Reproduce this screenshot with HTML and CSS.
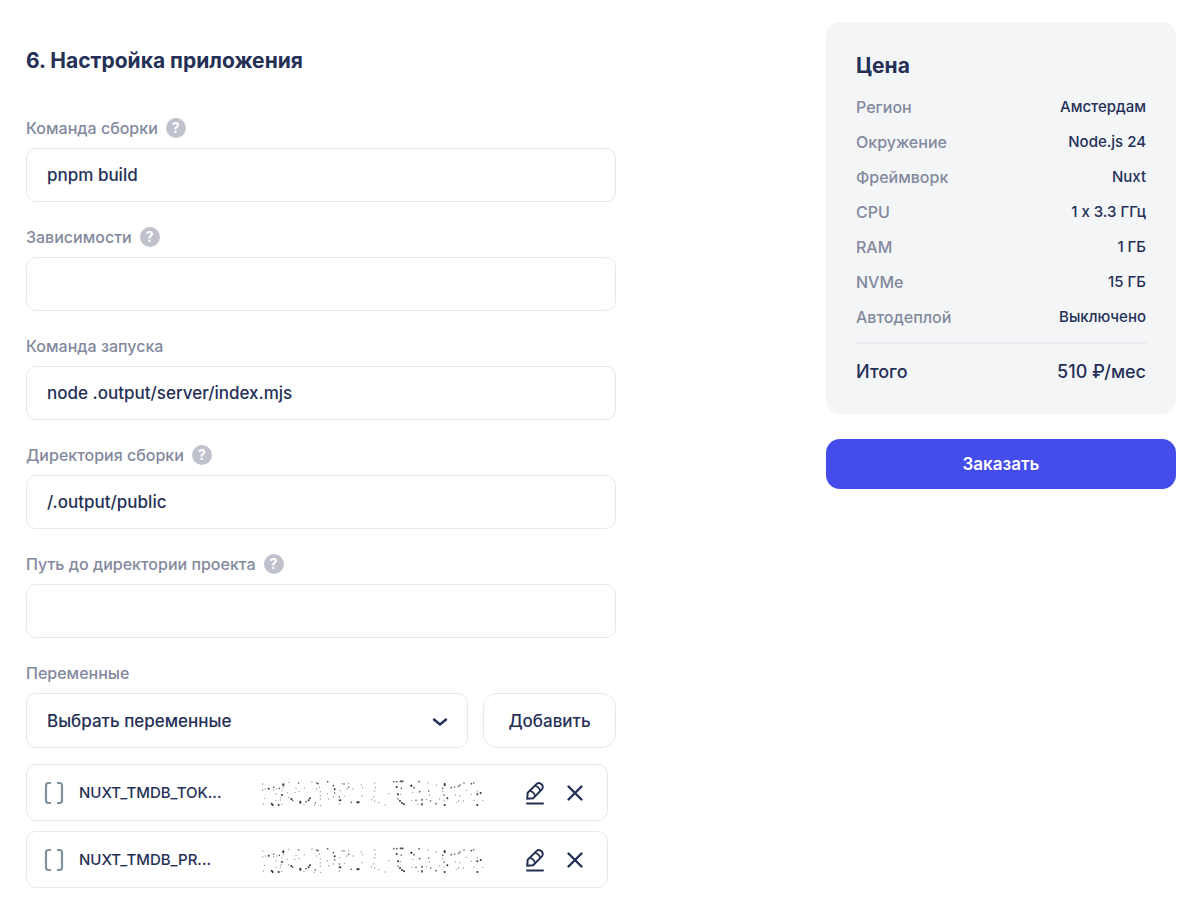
FILE: index.html
```html
<!DOCTYPE html>
<html lang="ru">
<head>
<meta charset="utf-8">
<meta name="viewport" content="width=device-width, initial-scale=1">
<title>Настройка приложения</title>
<link rel="stylesheet" href="styles.css">
</head>
<body>
<svg class="sprite" aria-hidden="true">
  <symbol id="brackets" viewBox="0 0 20 24">
    <path d="M7 2H4.500Q2 2 2 4.500V19.500Q2 22 4.500 22H7M13 2h2.500Q18 2 18 4.500V19.500Q18 22 15.500 22H13" fill="none" stroke="currentColor" stroke-width="2.200"/>
  </symbol>
  <symbol id="pencil" viewBox="0 0 20 24">
    <g fill="none" stroke="currentColor" stroke-width="2" stroke-linecap="round" stroke-linejoin="round">
      <path d="M2.200 17.800 2.700 11.700 11.700 2.900Q13.500 1.300 15.600 2.500L17.400 4.300Q18.600 6.300 17.100 8.100L8.200 17.200Z"/>
      <path stroke-width="1.700" d="M4.800 9.800Q9 11 10 15M10 4.900Q14.200 5.800 15.200 9.800"/>
      <path d="M2 22.600H18"/>
    </g>
  </symbol>
  <symbol id="cross" viewBox="0 0 20 20">
    <path d="M3.500 3.500 16.500 16.500M16.500 3.500 3.500 16.500" fill="none" stroke="currentColor" stroke-width="2.400" stroke-linecap="round"/>
  </symbol>
  <symbol id="speckles" viewBox="0 0 696 108">
    <g fill="none" stroke="#111" stroke-linecap="round">
      <path stroke-width="4" opacity=".45" d="M20 27h0M20 45h0M28 42h0M53 45h0M62 42h0M82 38h0M78 47h0M60 57h0M75 68h0M60 76h0M73 75h0M25 70h0M22 87h0M77 88h0M94 52h0M98 22h0M98 68h0M120 40h0M117 52h0M130 50h0M145 38h0M144 88h0M168 21h0M182 42h0M190 36h0M193 50h0M193 62h0M193 72h0M175 91h0M194 91h0M214 56h0M218 72h0M232 66h0M252 47h0M258 26h0M278 25h0M273 42h0M250 88h0M265 64h0M291 42h0M316 30h0M320 38h0M318 62h0M356 24h0M358 38h0M356 48h0M353 66h0M346 74h0M356 78h0M368 83h0M388 90h0M398 56h0M434 58h0M470 52h0M468 76h0M498 76h0M486 88h0M516 24h0M520 60h0M511 74h0M541 30h0M560 50h0M564 76h0M551 72h0M598 60h0M611 62h0M601 82h0M608 78h0M622 78h0M631 46h0M646 58h0M664 48h0M654 76h0M680 76h0"/>
      <path stroke-width="5" opacity=".7" d="M53 37h0M70 40h0M110 76h0M128 24h0M150 80h0M182 24h0M186 26h0M178 84h0M215 20h0M232 32h0M236 54h0M264 27h0M278 37h0M250 66h0M250 76h0M286 82h0M413 20h0M422 20h0M433 19h8M436 40h0M426 72h0M466 32h0M474 38h0M489 20h0M491 50h0M480 76h0M498 74h0M498 86v4M518 48h0M524 78h0M540 86h0M560 40h0M564 60h0M586 38h0M596 36h0M608 34h0M612 30h0M624 24h0M646 26h0M653 24h0"/>
      <path stroke-width="6" opacity=".85" d="M38 41h0M82 28v3M78 60h0M47 86h0M50 90h0M68 90h0M106 72h0M133 80v3M158 76h0M162 70h0M236 43h0M253 76h0M304 82h4M422 36h0M426 58h0M432 78h0M438 84h0M444 88h0M466 32h0M566 27v3M574 70h0M566 90h0M664 58h0M674 54h0M664 90h0"/>
    </g>
  </symbol>
</svg>

<div class="page">
  <main class="settings">
    <h1 class="title">6. Настройка приложения</h1>

    <form class="form">
      <div class="field">
        <div class="caption">
          <label for="build">Команда сборки</label>
          <button class="help" type="button" aria-label="Подсказка">?</button>
        </div>
        <input class="control" id="build" type="text" value="pnpm build">
      </div>
      <div class="field">
        <div class="caption">
          <label for="deps">Зависимости</label>
          <button class="help" type="button" aria-label="Подсказка">?</button>
        </div>
        <input class="control" id="deps" type="text">
      </div>
      <div class="field">
        <div class="caption">
          <label for="start">Команда запуска</label>
        </div>
        <input class="control" id="start" type="text" value="node .output/server/index.mjs">
      </div>
      <div class="field">
        <div class="caption">
          <label for="dist">Директория сборки</label>
          <button class="help" type="button" aria-label="Подсказка">?</button>
        </div>
        <input class="control" id="dist" type="text" value="/.output/public">
      </div>
      <div class="field">
        <div class="caption">
          <label for="path">Путь до директории проекта</label>
          <button class="help" type="button" aria-label="Подсказка">?</button>
        </div>
        <input class="control" id="path" type="text">
      </div>
      <div class="field">
        <div class="caption">
          <label for="vars">Переменные</label>
        </div>
        <div class="picker">
          <div class="select">
            <select class="control" id="vars">
              <option>Выбрать переменные</option>
            </select>
            <svg class="chevron" viewBox="0 0 18 12" aria-hidden="true"><path d="M3 3.500 9 8.500 15 3.500" fill="none" stroke="currentColor" stroke-width="2.400" stroke-linecap="round" stroke-linejoin="round"/></svg>
          </div>
          <button class="add" type="button">Добавить</button>
        </div>
        <ul class="variables">
          <li class="variable">
            <svg class="brackets" aria-hidden="true"><use href="#brackets"/></svg>
            <span class="name">NUXT_TMDB_TOK...</span>
            <svg class="secret" role="img" aria-label="Значение скрыто"><use href="#speckles"/></svg>
            <button class="action" type="button" aria-label="Изменить"><svg class="pencil"><use href="#pencil"/></svg></button>
            <button class="action" type="button" aria-label="Удалить"><svg class="cross"><use href="#cross"/></svg></button>
          </li>
          <li class="variable">
            <svg class="brackets" aria-hidden="true"><use href="#brackets"/></svg>
            <span class="name">NUXT_TMDB_PR...</span>
            <svg class="secret" role="img" aria-label="Значение скрыто"><use href="#speckles"/></svg>
            <button class="action" type="button" aria-label="Изменить"><svg class="pencil"><use href="#pencil"/></svg></button>
            <button class="action" type="button" aria-label="Удалить"><svg class="cross"><use href="#cross"/></svg></button>
          </li>
        </ul>
      </div>
    </form>
  </main>

  <aside class="summary">
    <section class="price">
      <h2 class="price-title">Цена</h2>
      <dl class="specs">
        <div class="spec"><dt>Регион</dt><dd>Амстердам</dd></div>
        <div class="spec"><dt>Окружение</dt><dd>Node.js 24</dd></div>
        <div class="spec"><dt>Фреймворк</dt><dd>Nuxt</dd></div>
        <div class="spec"><dt>CPU</dt><dd>1 x 3.3 ГГц</dd></div>
        <div class="spec"><dt>RAM</dt><dd>1 ГБ</dd></div>
        <div class="spec"><dt>NVMe</dt><dd>15 ГБ</dd></div>
        <div class="spec"><dt>Автодеплой</dt><dd>Выключено</dd></div>
      </dl>
      <div class="total"><span>Итого</span><span>510 ₽/мес</span></div>
    </section>
    <button class="order" type="button">Заказать</button>
  </aside>
</div>
</body>
</html>
```
FILE: styles.css
```css
* {
  box-sizing: border-box;
}

body {
  margin: 0;
  background: #fff;
  color: #253057;
  font-family: Inter, "Noto Sans", sans-serif;
  font-size: 15px;
  font-weight: 500;
  font-variant-ligatures: no-contextual;
  line-height: 20px;
}

h1, h2, dl, dd, ul {
  margin: 0;
  padding: 0;
}

button, input, select {
  margin: 0;
  color: inherit;
  font: inherit;
}

button {
  padding: 0;
  border: 0;
  background: none;
  cursor: pointer;
}

.sprite {
  display: none;
}

.page {
  display: flex;
  flex-wrap: wrap;
  align-items: flex-start;
  justify-content: space-between;
  gap: 24px;
  padding: 22px 22px 24px 26px;
}

.settings {
  flex: 0 1 590px;
  min-width: 0;
  padding-top: 25px;
}

.title,
.price-title {
  font-size: 21px;
  font-weight: 700;
  line-height: 28px;
}

.form {
  display: flex;
  flex-direction: column;
  gap: 25px;
  margin-top: 43px;
}

.caption {
  display: flex;
  align-items: center;
  gap: 8px;
  height: 20px;
  margin-bottom: 10px;
  color: #83899d;
  font-size: 16px;
}

.help {
  width: 20px;
  height: 20px;
  border-radius: 50%;
  background: #bfc1cd;
  color: #fff;
  font-size: 14px;
  font-weight: 700;
  line-height: 20px;
  text-align: center;
}

.control {
  display: block;
  width: 100%;
  height: 54px;
  padding: 0 20px;
  border: 1px solid #e8e9ea;
  border-radius: 10px;
  background: #fff;
  font-size: 17px;
  appearance: none;
  outline: none;
}

.picker {
  display: flex;
  gap: 15px;
}

.select {
  position: relative;
  flex: 1;
  min-width: 0;
}

.select .control {
  height: 55px;
}

.chevron {
  position: absolute;
  top: 23px;
  right: 19px;
  width: 18px;
  height: 12px;
  pointer-events: none;
}

.add {
  width: 133px;
  border: 1px solid #e8e9ea;
  border-radius: 14px;
  font-size: 17px;
}

.variables {
  display: flex;
  flex-direction: column;
  gap: 10px;
  margin: 16px 8px 0 0;
  list-style: none;
}

.variable {
  display: flex;
  align-items: center;
  height: 57px;
  padding: 0 21px 0 17px;
  border: 1px solid #e8e9ea;
  border-radius: 10px;
}

.brackets {
  flex: none;
  width: 20px;
  height: 24px;
  margin-right: 15px;
  color: #7d919f;
}

.name {
  flex: 1;
  min-width: 0;
  overflow: hidden;
  white-space: nowrap;
}

.secret {
  flex: 0 1 232px;
  min-width: 0;
  height: 36px;
  margin-right: 36px;
}

.action {
  display: flex;
  flex: none;
  width: 22px;
  height: 24px;
  align-items: center;
  justify-content: center;
}

.action + .action {
  margin-left: 18px;
}

.pencil {
  width: 20px;
  height: 24px;
}

.cross {
  width: 20px;
  height: 20px;
}

.summary {
  flex: 0 1 350px;
}

.price {
  padding: 30px;
  border-radius: 14px;
  background: #f3f5f7;
}

.specs {
  display: flex;
  flex-direction: column;
  gap: 15px;
  padding: 17px 0 15px;
  border-bottom: 2px solid #e8eaee;
}

.spec, .total {
  display: flex;
  justify-content: space-between;
}

.spec dt {
  color: #83899d;
  font-size: 16px;
}

.total {
  padding-top: 16px;
  font-size: 18px;
  line-height: 24px;
}

.order {
  display: block;
  width: 100%;
  height: 50px;
  margin-top: 25px;
  border-radius: 14px;
  background: #444ceb;
  color: #fff;
  font-size: 17px;
  font-weight: 600;
}
```
